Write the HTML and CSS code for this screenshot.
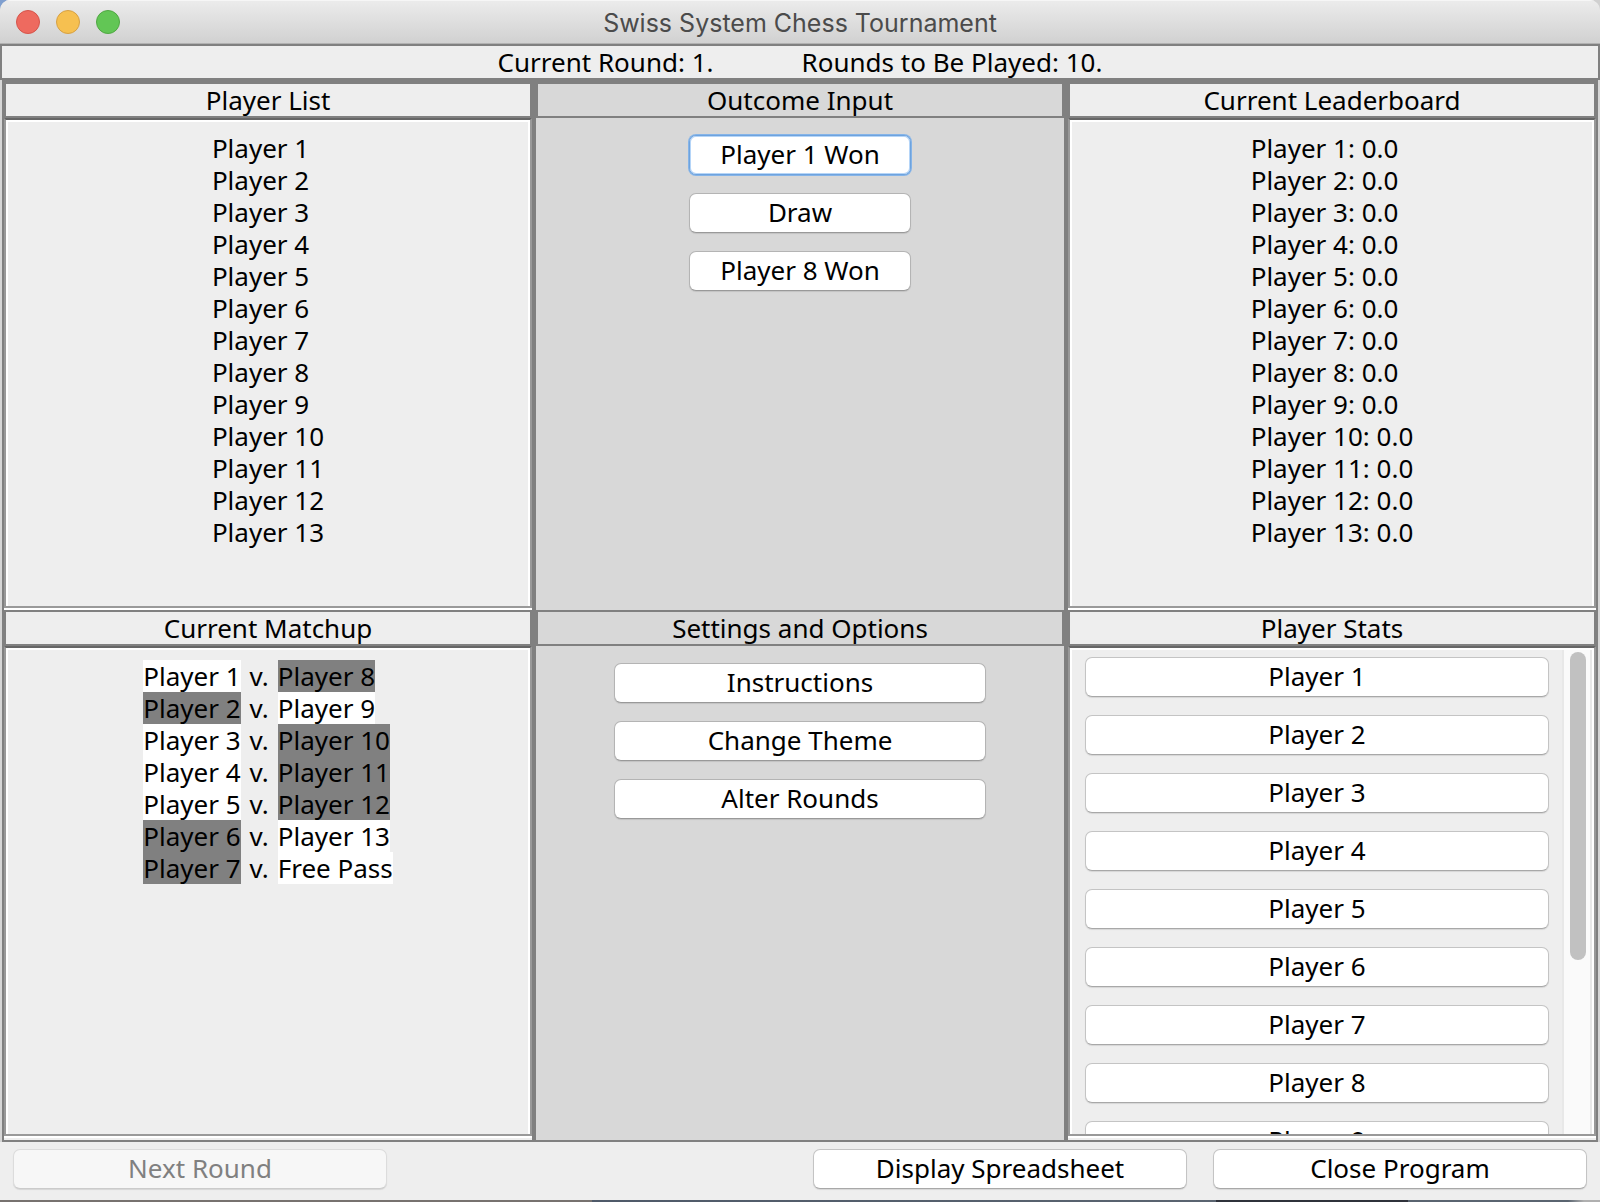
FILE: index.html
```html
<!DOCTYPE html>
<html lang="en">
<head>
<meta charset="utf-8">
<title>Swiss System Chess Tournament</title>
<link rel="stylesheet" href="styles.css">
</head>
<body>
<div class="window">
  <header class="titlebar">
    <div class="lights">
      <button class="light light-close" type="button" aria-label="Close"></button>
      <button class="light light-minimize" type="button" aria-label="Minimize"></button>
      <button class="light light-zoom" type="button" aria-label="Zoom"></button>
    </div>
    <h1 class="title">Swiss System Chess Tournament</h1>
  </header>

  <div class="status">
    <span>Current Round: 1.</span>
    <span>Rounds to Be Played: 10.</span>
  </div>

  <main class="board">
    <section class="panel">
      <h2 class="panel-title">Player List</h2>
      <div class="panel-body">
        <ul class="lines">
          <li>Player 1</li>
          <li>Player 2</li>
          <li>Player 3</li>
          <li>Player 4</li>
          <li>Player 5</li>
          <li>Player 6</li>
          <li>Player 7</li>
          <li>Player 8</li>
          <li>Player 9</li>
          <li>Player 10</li>
          <li>Player 11</li>
          <li>Player 12</li>
          <li>Player 13</li>
        </ul>
      </div>
    </section>

    <section class="panel panel-dark">
      <h2 class="panel-title">Outcome Input</h2>
      <div class="actions actions-outcome">
        <button class="btn btn-focused" type="button">Player 1 Won</button>
        <button class="btn" type="button">Draw</button>
        <button class="btn" type="button">Player 8 Won</button>
      </div>
    </section>

    <section class="panel">
      <h2 class="panel-title">Current Leaderboard</h2>
      <div class="panel-body">
        <ul class="lines">
          <li>Player 1: 0.0</li>
          <li>Player 2: 0.0</li>
          <li>Player 3: 0.0</li>
          <li>Player 4: 0.0</li>
          <li>Player 5: 0.0</li>
          <li>Player 6: 0.0</li>
          <li>Player 7: 0.0</li>
          <li>Player 8: 0.0</li>
          <li>Player 9: 0.0</li>
          <li>Player 10: 0.0</li>
          <li>Player 11: 0.0</li>
          <li>Player 12: 0.0</li>
          <li>Player 13: 0.0</li>
        </ul>
      </div>
    </section>

    <section class="panel">
      <h2 class="panel-title">Current Matchup</h2>
      <div class="panel-body">
        <ul class="lines">
          <li class="match"><span class="white">Player 1</span><span class="versus">v.</span><span class="black">Player 8</span></li>
          <li class="match"><span class="black">Player 2</span><span class="versus">v.</span><span class="white">Player 9</span></li>
          <li class="match"><span class="white">Player 3</span><span class="versus">v.</span><span class="black">Player 10</span></li>
          <li class="match"><span class="white">Player 4</span><span class="versus">v.</span><span class="black">Player 11</span></li>
          <li class="match"><span class="white">Player 5</span><span class="versus">v.</span><span class="black">Player 12</span></li>
          <li class="match"><span class="black">Player 6</span><span class="versus">v.</span><span class="white">Player 13</span></li>
          <li class="match"><span class="black">Player 7</span><span class="versus">v.</span><span class="white">Free Pass</span></li>
        </ul>
      </div>
    </section>

    <section class="panel panel-dark">
      <h2 class="panel-title">Settings and Options</h2>
      <div class="actions actions-settings">
        <button class="btn" type="button">Instructions</button>
        <button class="btn" type="button">Change Theme</button>
        <button class="btn" type="button">Alter Rounds</button>
      </div>
    </section>

    <section class="panel">
      <h2 class="panel-title">Player Stats</h2>
      <div class="panel-body">
        <div class="stats">
          <button class="btn" type="button">Player 1</button>
          <button class="btn" type="button">Player 2</button>
          <button class="btn" type="button">Player 3</button>
          <button class="btn" type="button">Player 4</button>
          <button class="btn" type="button">Player 5</button>
          <button class="btn" type="button">Player 6</button>
          <button class="btn" type="button">Player 7</button>
          <button class="btn" type="button">Player 8</button>
          <button class="btn" type="button">Player 9</button>
        </div>
        <div class="track"><div class="thumb"></div></div>
      </div>
    </section>
  </main>

  <footer class="footer">
    <button class="btn" type="button" disabled>Next Round</button>
    <button class="btn btn-third" type="button">Display Spreadsheet</button>
    <button class="btn" type="button">Close Program</button>
  </footer>
</div>
</body>
</html>
```
FILE: styles.css
```css
* {
  box-sizing: border-box;
}

body {
  display: flex;
  flex-direction: column;
  height: 100vh;
  margin: 0;
  color: #000;
  font: 26px/32px "Noto Sans", "Open Sans", sans-serif;
  background: linear-gradient(90deg, #7f9fcf 50%, #d0d0d0 50%);
}

/* Strip of desktop in the window's shadow */
body::after {
  content: "";
  flex: none;
  height: 2px;
  background: linear-gradient(90deg, #77726f 37%, #4f5a69 37%, #5a6470 76%, #2f323b 76%, #2f323b 88%, #5a6470 88%, #5a6470 98%, #b0b0b0 99%);
}

.window {
  display: flex;
  flex-direction: column;
  flex: 1;
  min-height: 0;
  border-radius: 10px 10px 0 0;
  background: #d6d6d6;
  overflow: hidden;
}

.titlebar {
  display: grid;
  grid-template-columns: 1fr auto 1fr;
  align-items: center;
  flex: none;
  height: 44px;
  padding: 0 16px;
  border-bottom: 1px solid #b1b1b1;
  background: linear-gradient(#ececec, #d1d1d1);
  box-shadow: inset 0 1px 0 #f6f6f6;
}

.lights {
  display: flex;
  gap: 16px;
}

.light {
  width: 24px;
  height: 24px;
  padding: 0;
  border: 1px solid;
  border-radius: 50%;
}

.light-close {
  border-color: #d5544b;
  background: #ee6a5f;
}

.light-minimize {
  border-color: #d6a044;
  background: #f6c050;
}

.light-zoom {
  border-color: #50a743;
  background: #62c655;
}

.title {
  margin: 0;
  padding-top: 2px;
  color: #4b4b4b;
  font: 400 25px/32px Inter, Roboto, sans-serif;
}

.status {
  display: flex;
  justify-content: center;
  gap: 88px;
  flex: none;
  border: 2px solid #808080;
  background: #eee;
}

/* Six panels in two rows */
.board {
  display: grid;
  grid-template-columns: repeat(3, 1fr);
  grid-template-rows: calc(50% - 1px) minmax(0, 1fr);
  flex: 1;
  min-height: 0;
  margin: 0 2px;
  border: solid #808080;
  border-width: 2px 0;
}

.panel {
  display: flex;
  flex-direction: column;
  min-height: 0;
  border: solid #808080;
  border-width: 0 2px;
  background: #eee;
}

.panel:nth-child(n + 4) {
  padding-bottom: 2px;
}

.panel-dark {
  background: #d8d8d8;
}

.panel-title {
  flex: none;
  margin: 0;
  border: 2px solid #808080;
  font-size: 26px;
  font-weight: 400;
  line-height: 32px;
  text-align: center;
}

.panel-body {
  display: flex;
  justify-content: center;
  flex: 1;
  min-height: 0;
  margin-bottom: 2px;
  padding: 2px 2px 0;
  border: 2px solid #999;
  border-top-color: #666;
  box-shadow: inset 2px 2px 0 #fff, inset -2px 0 0 #fff, 0 2px 0 #fff;
}

.lines {
  margin: 0;
  padding: 10px 0 0;
  list-style: none;
}

.match {
  display: flex;
}

.white {
  background: #fff;
}

.black {
  background: #808080;
}

.versus {
  padding: 0 9px;
}

.btn {
  height: 40px;
  padding: 0 0 2px;
  border: 1px solid #c4c4c4;
  border-bottom-color: #a8a8a8;
  border-radius: 7px;
  color: #000;
  background: #fff;
  box-shadow: 0 1px 1px rgba(0, 0, 0, 0.1);
  font: inherit;
  flex: none;
}

.panel-dark .btn {
  border-color: #b4b4b4;
  border-bottom-color: #999;
}

.panel-dark .btn-focused {
  border-color: #6ea3de;
  box-shadow: 0 0 0 1px #85b4e8, inset 0 0 0 1px #b5d5f8;
}

.btn:disabled {
  border-color: #dcdcdc;
  border-bottom-color: #cbcbcb;
  color: #808080;
  background: #f7f7f7;
}

.actions {
  display: grid;
  gap: 18px;
  justify-content: center;
  padding-top: 17px;
}

.actions-outcome {
  grid-template-columns: 222px;
}

.actions-settings {
  grid-template-columns: 372px;
}

.stats {
  display: flex;
  flex-direction: column;
  flex: 1;
  gap: 18px;
  padding: 7px 13px;
  overflow-y: auto;
  scrollbar-width: none;
}

.track {
  width: 30px;
  padding: 2px 4px 0 6px;
  border: solid #e8e8e8;
  border-width: 0 2px;
  background: #fafafa;
}

.thumb {
  width: 16px;
  height: 64%;
  border-radius: 8px;
  background: #c1c1c1;
}

.footer {
  display: grid;
  grid-template-columns: repeat(4, 1fr);
  flex: none;
  gap: 26px;
  padding: 7px 13px 11px;
  background: #eee;
}

.btn-third {
  grid-column: 3;
}
```
